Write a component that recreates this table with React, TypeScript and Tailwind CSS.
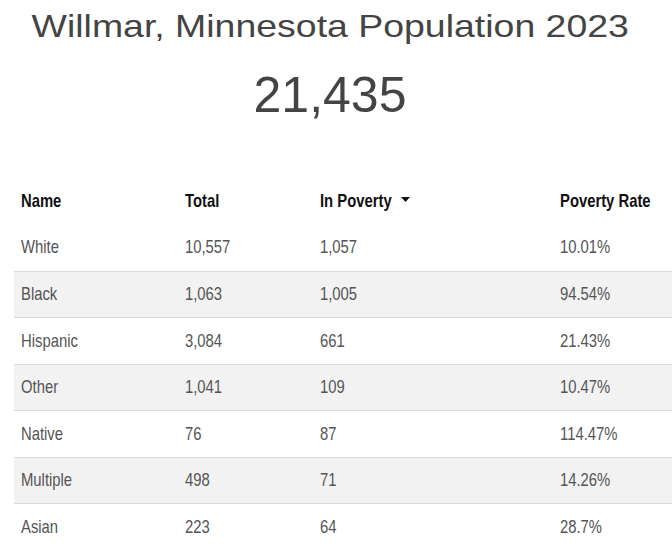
import React from "react";

const rows = [
  ["White", "10,557", "1,057", "10.01%"],
  ["Black", "1,063", "1,005", "94.54%"],
  ["Hispanic", "3,084", "661", "21.43%"],
  ["Other", "1,041", "109", "10.47%"],
  ["Native", "76", "87", "114.47%"],
  ["Multiple", "498", "71", "14.26%"],
  ["Asian", "223", "64", "28.7%"],
];

const cols = "grid grid-cols-[164px_135px_240px_1fr]";

// narrow text: the table uses a condensed face
function Narrow({ children }: { children: React.ReactNode }) {
  return <span className="inline-block origin-left scale-x-[0.78] whitespace-nowrap">{children}</span>;
}

export default function App() {
  return (
    <div className="w-[672px] h-[552px] overflow-hidden bg-white font-['Liberation_Sans',Arial,sans-serif]">
      <div className="pr-[12px] text-center text-[#444]">
        <h1 className="pt-[7px] text-[32px] leading-[38px]">
          <span className="inline-block scale-x-[1.17] whitespace-nowrap">
            Willmar, Minnesota Population 2023
          </span>
        </h1>
        <div className="mt-[21px] text-[50px] leading-[58px]">21,435</div>
      </div>

      <div className="mt-[54px] ml-[14px] w-[700px] text-[19px]">
        <div className={`${cols} h-[46px] items-center font-bold text-[#111]`}>
          <div className="pl-[7px]"><Narrow>Name</Narrow></div>
          <div className="pl-[7px]"><Narrow>Total</Narrow></div>
          <div className="pl-[7px] flex items-center">
            <Narrow>In Poverty</Narrow>
            <svg width="9" height="5" viewBox="0 0 9 5" className="-ml-[11px] mb-[3px]">
              <path d="M0 0h9L4.5 5z" fill="#111" />
            </svg>
          </div>
          <div className="pl-[7px]"><Narrow>Poverty Rate</Narrow></div>
        </div>
        {rows.map((r, i) => (
          <div
            key={r[0]}
            className={`${cols} h-[46.5px] items-center text-[#555] ${
              i > 0 ? "border-t border-[#dcdcdc]" : ""
            } ${i % 2 === 1 ? "bg-[#f2f2f2]" : ""}`}
          >
            {r.map((c, j) => (
              <div key={j} className="pl-[7px]">
                <Narrow>{c}</Narrow>
              </div>
            ))}
          </div>
        ))}
      </div>
    </div>
  );
}
